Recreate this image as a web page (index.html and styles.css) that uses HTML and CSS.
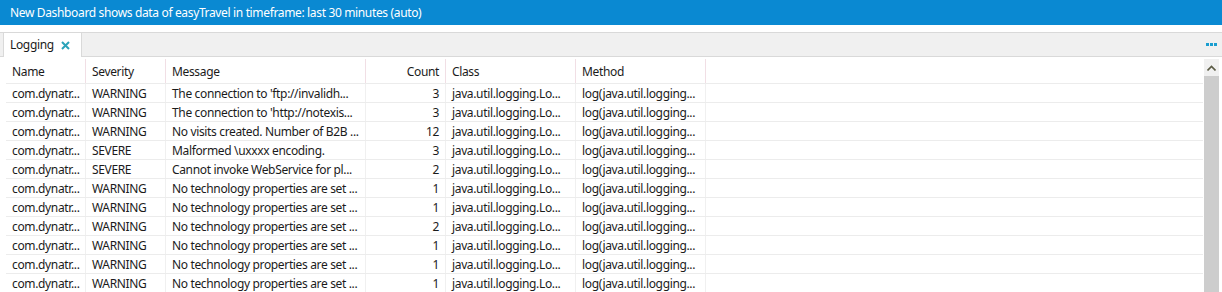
FILE: index.html
```html
<!DOCTYPE html>
<html lang="en">
<head>
    <meta charset="UTF-8">
    <title>Logging</title>
    <link rel="stylesheet" href="styles.css">
</head>
<body>
    <div class="topbar">New Dashboard shows data of easyTravel in timeframe: last 30 minutes (auto)</div>
    <div class="tabstrip">
        <div class="tab">Logging
            <svg class="tab-close" width="9" height="9" viewBox="0 0 9 9"><path d="M1 1 L8 8 M8 1 L1 8" stroke="#2aa3b9" stroke-width="2"/></svg>
        </div>
        <div class="tab-more"><i></i><i></i><i></i></div>
    </div>
    <div class="grid-wrap">
        <div class="grid" id="grid">
            <div class="row head">
                <div>Name</div><div>Severity</div><div>Message</div><div class="num">Count</div><div>Class</div><div>Method</div><div class="filler"></div>
            </div>
        </div>
        <div class="scrollbar">
            <div class="scroll-btn">
                <svg width="9" height="6" viewBox="0 0 9 6"><path d="M0.5 5.5 L4.5 1.5 L8.5 5.5" fill="none" stroke="#5b5b45" stroke-width="1.6"/></svg>
            </div>
            <div class="scroll-thumb"></div>
        </div>
    </div>

    <script>
        const rows = [
            ['WARNING', "The connection to 'ftp://invalidh...", 3],
            ['WARNING', "The connection to 'http://notexis...", 3],
            ['WARNING', 'No visits created. Number of B2B ...', 12],
            ['SEVERE', 'Malformed \\uxxxx encoding.', 3],
            ['SEVERE', 'Cannot invoke WebService for pl...', 2],
            ['WARNING', 'No technology properties are set ...', 1],
            ['WARNING', 'No technology properties are set ...', 1],
            ['WARNING', 'No technology properties are set ...', 2],
            ['WARNING', 'No technology properties are set ...', 1],
            ['WARNING', 'No technology properties are set ...', 1],
            ['WARNING', 'No technology properties are set ...', 1]
        ];
        const grid = document.getElementById('grid');
        for (let r of rows) {
            const row = document.createElement('div');
            row.className = 'row';
            const cells = ['com.dynatr...', r[0], r[1], r[2], 'java.util.logging.Lo...', 'log(java.util.logging...', ''];
            cells.forEach(function(text, i) {
                const cell = document.createElement('div');
                cell.textContent = text;
                if (i === 3) cell.className = 'num';
                if (i === 6) cell.className = 'filler';
                row.appendChild(cell);
            });
            grid.appendChild(row);
        }
    </script>
</body>
</html>
```

FILE: styles.css
```css
body {
    margin: 0;
    font-family: "Noto Sans", "Open Sans", sans-serif;
    font-size: 12px;
    letter-spacing: -0.35px;
    color: #1b1b1b;
    background-color: #fff;
    overflow: hidden;
}
.topbar {
    height: 25px;
    line-height: 25px;
    background-color: #0a89d2;
    color: #fff;
    padding-left: 10px;
}
.tabstrip {
    margin-top: 7px;
    height: 23px;
    background-color: #f0f0f0;
    border-top: 1px solid #d9d9d9;
    border-bottom: 1px solid #d9d9d9;
    display: flex;
    align-items: stretch;
    justify-content: space-between;
}
.tab {
    margin-left: 3px;
    margin-top: -1px;
    margin-bottom: -1px;
    width: 71px;
    padding-left: 6px;
    background-color: #fff;
    border: 1px solid #d9d9d9;
    border-bottom: none;
    line-height: 23px;
}
.tab-close {
    margin-left: 4px;
    vertical-align: -1px;
}
.tab-more {
    display: flex;
    gap: 1px;
    align-items: center;
    padding-right: 5px;
}
.tab-more i {
    display: block;
    width: 3px;
    height: 3px;
    background-color: #1a9ed0;
}
.grid-wrap {
    margin-top: 2px;
    display: flex;
    padding-left: 6px;
}
.grid {
    width: 1197px;
}
.row {
    display: grid;
    grid-template-columns: 80px 80px 200px 80px 130px 130px 1fr;
    height: 19px;
    box-sizing: border-box;
    border-top: 1px solid #ececec;
}
.row > div {
    padding: 2px 6px 0;
    line-height: 16px;
    border-right: 1px solid #f0f0f0;
    white-space: nowrap;
    overflow: hidden;
}
.row.head {
    height: 24px;
    border-top: none;
}
.row.head > div {
    line-height: 22px;
    border-right-color: #f1dfe5;
}
.row .num { text-align: right; }
.row > .filler { border-right: none; }
.scrollbar {
    width: 15px;
    margin-left: 1px;
    height: 240px;
    display: flex;
    flex-direction: column;
}
.scroll-btn {
    height: 17px;
    background-color: #f0f0f0;
    display: flex;
    align-items: center;
    justify-content: center;
}
.scroll-thumb {
    flex: 1;
    background-color: #cdcdcd;
}
```
